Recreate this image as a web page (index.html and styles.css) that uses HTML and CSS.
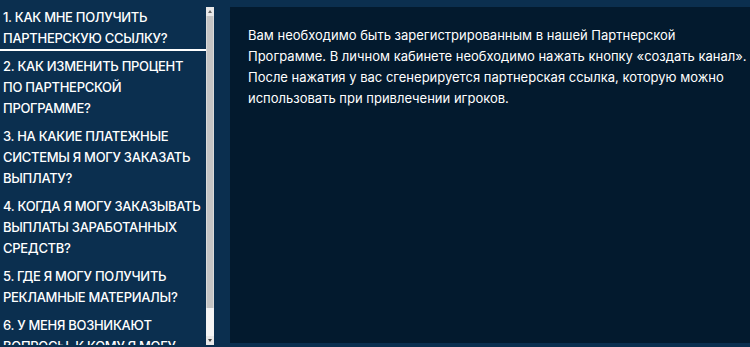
FILE: index.html
```html
<!DOCTYPE html>
<html lang="ru">
<head>
  <meta charset="UTF-8">
  <meta name="viewport" content="width=device-width, initial-scale=1.0">
  <title>FAQ</title>
  <link rel="stylesheet" href="styles.css">
</head>
<body>
  <div class="faq">
    <div class="faq-side">
      <ul class="faq-list">
        <li class="faq-item active">1. КАК МНЕ ПОЛУЧИТЬ ПАРТНЕРСКУЮ ССЫЛКУ?</li>
        <li class="faq-item">2. КАК ИЗМЕНИТЬ ПРОЦЕНТ ПО ПАРТНЕРСКОЙ ПРОГРАММЕ?</li>
        <li class="faq-item">3. НА КАКИЕ ПЛАТЕЖНЫЕ СИСТЕМЫ Я МОГУ ЗАКАЗАТЬ ВЫПЛАТУ?</li>
        <li class="faq-item">4. КОГДА Я МОГУ ЗАКАЗЫВАТЬ ВЫПЛАТЫ ЗАРАБОТАННЫХ СРЕДСТВ?</li>
        <li class="faq-item">5. ГДЕ Я МОГУ ПОЛУЧИТЬ РЕКЛАМНЫЕ МАТЕРИАЛЫ?</li>
        <li class="faq-item">6. У МЕНЯ ВОЗНИКАЮТ ВОПРОСЫ, К КОМУ Я МОГУ ОБРАТИТЬСЯ?</li>
      </ul>
      <!-- drawn scrollbar, headless hides native one -->
      <div class="scrollbar">
        <span class="sb-btn up"></span>
        <span class="sb-thumb"></span>
        <span class="sb-track"></span>
        <span class="sb-btn down"></span>
      </div>
    </div>
    <div class="faq-answer">
      <p>Вам необходимо быть зарегистрированным в нашей Партнерской Программе. В личном кабинете необходимо нажать кнопку «создать канал». После нажатия у вас сгенерируется партнерская ссылка, которую можно использовать при привлечении игроков.</p>
    </div>
  </div>
</body>
</html>
```

FILE: styles.css
```css
body {
  font-family: Inter, "Open Sans", sans-serif;
  background-color: #0b2f4f;
  color: #fff;
  margin: 0;
  padding: 7px 0 0 0;
}
.faq {
  display: flex;
  gap: 16px;
}
.faq-side {
  display: flex;
  height: 338px;
  flex-shrink: 0;
}
.faq-list {
  list-style: none;
  margin: 0;
  padding: 0;
  width: 206px;
  overflow: hidden;
}
.scrollbar {
  width: 8px;
  display: flex;
  flex-direction: column;
  background: #f0f0f0;
}
.sb-btn {
  height: 9px;
  background: #e8e8e8;
  position: relative;
}
.sb-btn::after {
  content: "";
  position: absolute;
  left: 2px;
  top: 3px;
  border-left: 2px solid transparent;
  border-right: 2px solid transparent;
}
.sb-btn.up::after {
  border-bottom: 3px solid #666;
}
.sb-btn.down::after {
  border-top: 3px solid #444;
}
.sb-thumb {
  height: 292px;
  background: #c4c4c4;
  border-left: 1px solid #dadada;
  border-right: 1px solid #dadada;
}
.sb-track {
  flex: 1;
  background: #f4f4f4;
}
.faq-item {
  font-size: 13px;
  font-weight: 500;
  letter-spacing: -0.3px;
  line-height: 21px;
  padding: 0 2px 0 3px;
  margin-bottom: 5px;
  border-bottom: 2px solid transparent;
  cursor: pointer;
}
.faq-item.active {
  border-bottom-color: #fff;
}
.faq-answer {
  flex: 1;
  height: 336px;
  background: #031a2e;
  padding: 18px 0 0 18px;
  box-sizing: border-box;
}
.faq-answer p {
  margin: 0;
  font-size: 13px;
  line-height: 21px;
}
```
